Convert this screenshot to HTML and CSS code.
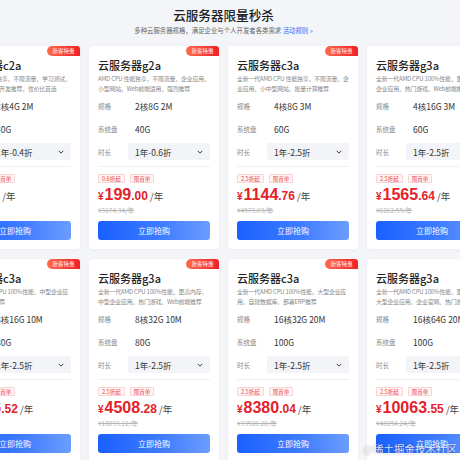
FILE: index.html
```html
<!DOCTYPE html>
<html lang="zh-CN">
<head>
  <meta charset="UTF-8">
  <meta name="viewport" content="width=device-width, initial-scale=1.0">
  <title>云服务器限量秒杀</title>
  <link rel="stylesheet" href="styles.css">
</head>
<body>
  <div class="page">
    <div class="header">
      <h1>云服务器限量秒杀</h1>
      <p class="subtitle">多种云服务器规格，满足企业与个人开发者各类需求 <a href="#">活动规则 »</a></p>
    </div>

    <div class="grid">
      <!-- row 1 -->
      <div class="card">
        <span class="badge">新客特惠</span>
        <h3>云服务器c2a</h3>
        <p class="desc">AMD CPU 性能独享，不限流量，学习测试，小型网站、个人开发推荐，性价比首选</p>
        <div class="row"><span class="label">规格</span><span class="value">2核4G 2M</span></div>
        <div class="row"><span class="label">系统盘</span><span class="value">40G</span></div>
        <div class="row select-row"><span class="label">时长</span><div class="select">1年-0.4折<svg viewBox="0 0 8 5"><path d="M1 1l3 3 3-3"/></svg></div></div>
        <div class="tags"><span class="tag">0.4折起</span><span class="tag">限首单</span></div>
        <div class="price"><span class="cur">¥</span><span class="int">99</span><span class="dec">.00</span><span class="unit"> /年</span></div>
        <div class="old">¥2474.35/年</div>
        <button class="buy">立即抢购</button>
      </div>

      <div class="card">
        <span class="badge">新客特惠</span>
        <h3>云服务器g2a</h3>
        <p class="desc">AMD CPU 性能独享，不限流量，企业应用、小型网站、Web前端适用，强烈推荐</p>
        <div class="row"><span class="label">规格</span><span class="value">2核8G 2M</span></div>
        <div class="row"><span class="label">系统盘</span><span class="value">40G</span></div>
        <div class="row select-row"><span class="label">时长</span><div class="select">1年-0.6折<svg viewBox="0 0 8 5"><path d="M1 1l3 3 3-3"/></svg></div></div>
        <div class="tags"><span class="tag">0.6折起</span><span class="tag">限首单</span></div>
        <div class="price"><span class="cur">¥</span><span class="int">199</span><span class="dec">.00</span><span class="unit"> /年</span></div>
        <div class="old">¥3174.34/年</div>
        <button class="buy">立即抢购</button>
      </div>

      <div class="card">
        <span class="badge">新客特惠</span>
        <h3>云服务器c3a</h3>
        <p class="desc">全新一代AMD CPU 性能独享，不限流量，企业应用、小中型网站、批量计算推荐</p>
        <div class="row"><span class="label">规格</span><span class="value">4核8G 3M</span></div>
        <div class="row"><span class="label">系统盘</span><span class="value">60G</span></div>
        <div class="row select-row"><span class="label">时长</span><div class="select">1年-2.5折<svg viewBox="0 0 8 5"><path d="M1 1l3 3 3-3"/></svg></div></div>
        <div class="tags"><span class="tag">2.5折起</span><span class="tag">限首单</span></div>
        <div class="price"><span class="cur">¥</span><span class="int">1144</span><span class="dec">.76</span><span class="unit"> /年</span></div>
        <div class="old">¥4579.03/年</div>
        <button class="buy">立即抢购</button>
      </div>

      <div class="card">
        <span class="badge">新客特惠</span>
        <h3>云服务器g3a</h3>
        <p class="desc">全新一代AMD CPU 100%性能，更高内存，企业应用、热门游戏、Web前端推荐</p>
        <div class="row"><span class="label">规格</span><span class="value">4核16G 3M</span></div>
        <div class="row"><span class="label">系统盘</span><span class="value">60G</span></div>
        <div class="row select-row"><span class="label">时长</span><div class="select">1年-2.5折<svg viewBox="0 0 8 5"><path d="M1 1l3 3 3-3"/></svg></div></div>
        <div class="tags"><span class="tag">2.5折起</span><span class="tag">限首单</span></div>
        <div class="price"><span class="cur">¥</span><span class="int">1565</span><span class="dec">.64</span><span class="unit"> /年</span></div>
        <div class="old">¥6262.55/年</div>
        <button class="buy">立即抢购</button>
      </div>

      <!-- row 2 -->
      <div class="card">
        <span class="badge">新客特惠</span>
        <h3>云服务器c3a</h3>
        <p class="desc">全新一代AMD CPU 100%性能，中型企业应用、Web前端推荐</p>
        <div class="row"><span class="label">规格</span><span class="value">8核16G 10M</span></div>
        <div class="row"><span class="label">系统盘</span><span class="value">80G</span></div>
        <div class="row select-row"><span class="label">时长</span><div class="select">1年-2.5折<svg viewBox="0 0 8 5"><path d="M1 1l3 3 3-3"/></svg></div></div>
        <div class="tags"><span class="tag">2.5折起</span><span class="tag">限首单</span></div>
        <div class="price"><span class="cur">¥</span><span class="int">2286</span><span class="dec">.52</span><span class="unit"> /年</span></div>
        <div class="old">¥9146.08/年</div>
        <button class="buy">立即抢购</button>
      </div>

      <div class="card">
        <span class="badge">新客特惠</span>
        <h3>云服务器g3a</h3>
        <p class="desc">全新一代AMD CPU 100%性能，更高内存，中型企业应用、热门游戏、Web前端推荐</p>
        <div class="row"><span class="label">规格</span><span class="value">8核32G 10M</span></div>
        <div class="row"><span class="label">系统盘</span><span class="value">80G</span></div>
        <div class="row select-row"><span class="label">时长</span><div class="select">1年-2.5折<svg viewBox="0 0 8 5"><path d="M1 1l3 3 3-3"/></svg></div></div>
        <div class="tags"><span class="tag">2.5折起</span><span class="tag">限首单</span></div>
        <div class="price"><span class="cur">¥</span><span class="int">4508</span><span class="dec">.28</span><span class="unit"> /年</span></div>
        <div class="old">¥18033.12/年</div>
        <button class="buy">立即抢购</button>
      </div>

      <div class="card">
        <span class="badge">新客特惠</span>
        <h3>云服务器c3a</h3>
        <p class="desc">全新一代AMD CPU 100%性能，大型企业应用、自建数据库、部署ERP推荐</p>
        <div class="row"><span class="label">规格</span><span class="value">16核32G 20M</span></div>
        <div class="row"><span class="label">系统盘</span><span class="value">100G</span></div>
        <div class="row select-row"><span class="label">时长</span><div class="select">1年-2.5折<svg viewBox="0 0 8 5"><path d="M1 1l3 3 3-3"/></svg></div></div>
        <div class="tags"><span class="tag">2.5折起</span><span class="tag">限首单</span></div>
        <div class="price"><span class="cur">¥</span><span class="int">8380</span><span class="dec">.04</span><span class="unit"> /年</span></div>
        <div class="old">¥33520.20/年</div>
        <button class="buy">立即抢购</button>
      </div>

      <div class="card">
        <span class="badge">新客特惠</span>
        <h3>云服务器g3a</h3>
        <p class="desc">全新一代AMD CPU 100%性能，更高内存，大型企业应用、企业官网、热门游戏</p>
        <div class="row"><span class="label">规格</span><span class="value">16核64G 20M</span></div>
        <div class="row"><span class="label">系统盘</span><span class="value">100G</span></div>
        <div class="row select-row"><span class="label">时长</span><div class="select">1年-2.5折<svg viewBox="0 0 8 5"><path d="M1 1l3 3 3-3"/></svg></div></div>
        <div class="tags"><span class="tag">2.5折起</span><span class="tag">限首单</span></div>
        <div class="price"><span class="cur">¥</span><span class="int">10063</span><span class="dec">.55</span><span class="unit"> /年</span></div>
        <div class="old">¥40254.24/年</div>
        <button class="buy">立即抢购</button>
      </div>
    </div>
  </div>

  <div class="watermark">@稀土掘金技术社区</div>
</body>
</html>
```

FILE: styles.css
```css
:root {
  --red: #e3222a;
  --blue: #1f66ff;
  --text: #222;
  --gray: #8a8a8a;
  --page-bg: #f4f5f8;
}

body {
  margin: 0;
  background: var(--page-bg);
  font-family: "Noto Sans CJK SC", "Liberation Sans", sans-serif;
  color: var(--text);
  overflow: hidden;
}

.page {
  width: 547px;
  margin-left: -50px;
}

.header {
  text-align: center;
  padding-top: 6px;
}

.header h1 {
  margin: 0;
  font-size: 12.6px;
  line-height: 18px;
  font-weight: 500;
  color: #222;
}

.subtitle {
  margin: 2px 0 0;
  font-size: 6.4px;
  line-height: 10px;
  color: #666;
}

.subtitle a {
  color: #2f6bff;
  text-decoration: none;
}

.grid {
  display: grid;
  grid-template-columns: repeat(4, 130px);
  column-gap: 9px;
  row-gap: 10px;
  margin-top: 10px;
}

.card {
  position: relative;
  background: #fff;
  border-radius: 4px;
  padding: 12px 9px 9px;
  box-shadow: 0 1px 4px rgba(30, 40, 80, 0.04);
}

.badge {
  position: absolute;
  top: 0;
  right: 0;
  width: 33px;
  height: 10px;
  line-height: 10px;
  font-size: 5.5px;
  text-align: center;
  color: #fff;
  background: linear-gradient(90deg, #ff6b4a, #f02028);
  border-radius: 6px 4px 0 6px;
}

.card h3 {
  margin: 0;
  font-size: 11px;
  line-height: 14px;
  font-weight: 500;
}

.desc {
  margin: 2px 0 0;
  height: 20px;
  font-size: 5.9px;
  letter-spacing: -0.15px;
  line-height: 10px;
  color: #888;
  overflow: hidden;
}

.row {
  display: flex;
  align-items: center;
  height: 22px;
}

.row:first-of-type {
  margin-top: 1px;
}

.row + .row {
  margin-top: 1px;
}

.label {
  width: 37px;
  flex: none;
  font-size: 6.5px;
  color: var(--gray);
}

.value {
  font-size: 8.5px;
  color: #333;
}

.select-row {
  height: 17px;
  margin-top: 3px !important;
  padding-bottom: 6px;
  border-bottom: 1px solid #eef0f4;
}

.select-row .label {
  width: 30px;
}

.select {
  flex: 1;
  height: 17px;
  display: flex;
  align-items: center;
  justify-content: space-between;
  padding: 0 7px;
  background: #f2f4f8;
  border-radius: 2px;
  font-size: 8.5px;
  color: #333;
}

.select svg {
  width: 6px;
  height: 4px;
  fill: none;
  stroke: #333;
  stroke-width: 1.3;
}

.tags {
  display: flex;
  gap: 5px;
  margin-top: 7px;
}

.tag {
  height: 9px;
  line-height: 9px;
  padding: 0 3px;
  font-size: 5.5px;
  color: #e8454a;
  background: #fff5f5;
  border: 1px solid #f8d3d3;
  border-radius: 1px;
  box-sizing: border-box;
}

.price {
  margin-top: 4px;
  height: 16px;
  line-height: 16px;
  color: var(--red);
  font-family: "Liberation Sans", sans-serif;
  font-weight: bold;
  white-space: nowrap;
}

.price .cur {
  font-size: 10px;
  margin-right: 1px;
}

.price .int {
  font-size: 16px;
}

.price .dec {
  font-size: 12px;
}

.price .unit {
  font-family: "Noto Sans CJK SC", sans-serif;
  font-weight: normal;
  font-size: 9.5px;
  color: #444;
}

.old {
  margin-top: 2px;
  height: 10px;
  line-height: 10px;
  font-size: 6.5px;
  color: #b5b5b5;
  text-decoration: line-through;
}

.buy {
  display: block;
  width: 100%;
  height: 19px;
  margin-top: 6px;
  border: none;
  border-radius: 3px;
  background: linear-gradient(90deg, #1a60ff 0%, #3d7bff 55%, #6c9dff 100%);
  color: #fff;
  font-family: inherit;
  font-size: 8px;
  cursor: pointer;
}

.watermark {
  position: absolute;
  right: 3px;
  bottom: 4px;
  font-size: 10.5px;
  color: rgba(255, 255, 255, 0.85);
  text-shadow: 0 0 2px rgba(0, 0, 0, 0.35);
}
```
